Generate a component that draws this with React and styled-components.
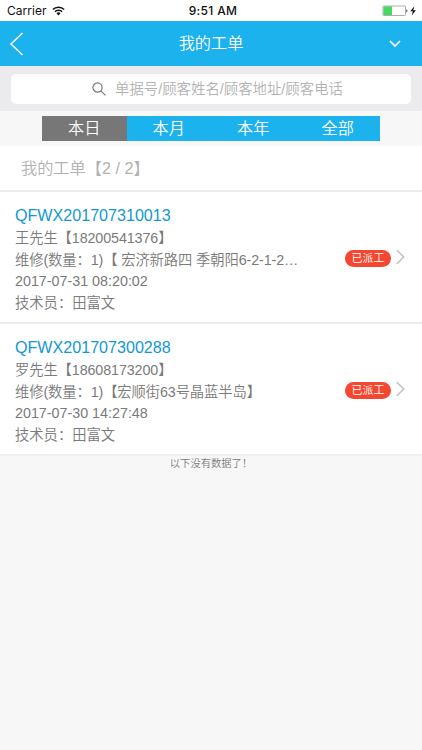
import React from "react";
import styled, { createGlobalStyle } from "styled-components";

const GlobalStyle = createGlobalStyle`
  * { box-sizing: border-box; }
  body { margin: 0; background: #f7f7f7; }
`;

const Page = styled.div`
  display: flex;
  flex-direction: column;
  width: 422px;
  min-height: 750px;
  background: #f7f7f7;
  color: #7a7a7a;
  font-family: "Liberation Sans", "Noto Sans CJK SC", sans-serif;
  font-weight: 350;
  white-space: nowrap;
`;

const StatusBar = styled.div`
  display: grid;
  grid-template-columns: 1fr auto 1fr;
  align-items: center;
  height: 21px;
  padding: 1px 4px 0 7px;
  background: #fff;
  color: #111;
  font: 400 12px/20px Inter, sans-serif;
`;

const Carrier = styled.div`
  display: flex;
  align-items: center;
  gap: 5px;
  letter-spacing: 0.05px;
`;

const Clock = styled.div`
  font-weight: 500;
  letter-spacing: 0.35px;
  padding-left: 1px;
`;

const Power = styled.div`
  display: flex;
  justify-content: flex-end;
`;

const NavBar = styled.header`
  display: grid;
  grid-template-columns: 40px 1fr 40px;
  align-items: center;
  height: 45px;
  background: #1bb2ed;
  color: #fff;
`;

const NavIcon = styled.button`
  display: flex;
  height: 45px;
  padding: 0;
  border: 0;
  background: none;
  color: inherit;
  align-items: center;
`;

const NavTitle = styled.h1`
  margin: 0;
  text-align: center;
  font-size: 16.2px;
  font-weight: 350;
  line-height: 45px;
`;

const SearchArea = styled.div`
  height: 45px;
  padding: 8px 11px 7px;
  background: #ebebed;
`;

const SearchField = styled.div`
  display: flex;
  align-items: center;
  justify-content: center;
  gap: 9px;
  height: 30px;
  padding-left: 13px;
  border-radius: 5px;
  background: #fff;
  color: #b2b2b2;
  font-size: 14.4px;
  line-height: 31px;
`;

const TabArea = styled.div`
  display: flex;
  justify-content: center;
  height: 35px;
  padding: 5px 42px;
`;

const Tab = styled.button`
  flex: 1;
  height: 25px;
  padding: 0;
  border: 0;
  background: ${(p) => (p.$active ? "#777" : "#1bb2ed")};
  color: #fff;
  font: inherit;
  font-size: 16.2px;
  line-height: 25px;
`;

const SectionTitle = styled.h2`
  height: 46px;
  margin: 0;
  padding-left: 21px;
  border-bottom: 2px solid #ececec;
  background: #fff;
  color: #b2b2b2;
  font-size: 16.2px;
  font-weight: 350;
  line-height: 45px;
`;

const Order = styled.article`
  display: flex;
  align-items: center;
  height: 132px;
  padding: 0 17px 0 15px;
  border-bottom: 2px solid #ececec;
  background: #fff;

  &:last-of-type {
    border-bottom-color: #f0f0f2;
  }
`;

const OrderBody = styled.div`
  width: 288px;
  padding-top: 4px;
`;

const OrderNumber = styled.div`
  height: 24.4px;
  color: #1398d2;
  font-size: 16.1px;
  line-height: 22px;
`;

const OrderLine = styled.div`
  height: 21.4px;
  overflow: hidden;
  text-overflow: ellipsis;
  font-size: 14.3px;
  letter-spacing: ${(p) => (p.$tight ? "-0.1px" : "normal")};
  line-height: 21.4px;
`;

const Badge = styled.span`
  width: 46px;
  height: 17px;
  margin: 2px 5px 0 auto;
  border-radius: 9px;
  background: #f5462f;
  color: #fff;
  text-align: center;
  font-size: 11px;
  line-height: 17px;
`;

const EndNote = styled.p`
  margin: 0;
  text-align: center;
  font-size: 10.3px;
  line-height: 15px;
`;

const orders = [
  {
    id: "QFWX201707310013",
    customer: "王先生【18200541376】",
    job: "维修(数量：1)【 宏济新路四 季朝阳6-2-1-2…",
    time: "2017-07-31 08:20:02",
    technician: "田富文",
  },
  {
    id: "QFWX201707300288",
    customer: "罗先生【18608173200】",
    job: "维修(数量：1)【宏顺街63号晶蓝半岛】",
    time: "2017-07-30 14:27:48",
    technician: "田富文",
  },
];

const WifiIcon = () => (
  <svg width="13" height="10" viewBox="0 0 13 10" fill="none" stroke="#111" strokeWidth="1.5">
    <path d="M.8 3.5a8.1 8.1 0 0 1 11.4 0M2.9 5.7a5.1 5.1 0 0 1 7.2 0" />
    <path d="M6.5 9.4 4.5 7.3a2.9 2.9 0 0 1 4 0Z" fill="#111" stroke="none" />
  </svg>
);

const BatteryIcon = () => (
  <svg width="36" height="12" viewBox="0 0 36 12">
    <rect x="1" y="1" width="22.5" height="9.5" rx="1" fill="#fff" stroke="#999" strokeWidth=".8" />
    <path d="M1.4 1.4H10v8.7H1.4z" fill="#4bd763" />
    <path d="M24 4.2q1.5 0 1.5 1.6T24 7.4z" fill="#777" />
    <path d="m32.3 1.2-4 5.1h2.5l-1 4.2 4.1-5.3h-2.6z" fill="#111" />
  </svg>
);

const ArrowRight = () => (
  <svg width="9" height="16" viewBox="0 0 9 16" fill="none" stroke="#c2c2c5" strokeWidth="1.5">
    <path d="m.7 1 7 7-7 7" />
  </svg>
);

export default function App() {
  return (
    <Page>
      <GlobalStyle />
      <StatusBar>
        <Carrier>Carrier <WifiIcon /></Carrier>
        <Clock>9:51 AM</Clock>
        <Power><BatteryIcon /></Power>
      </StatusBar>
      <NavBar>
        <NavIcon aria-label="返回">
          <svg width="25" height="24" viewBox="0 0 25 24" fill="none" stroke="#fff" strokeWidth="1.5">
            <path d="M22.5 1 11 12l11.5 11" />
          </svg>
        </NavIcon>
        <NavTitle>我的工单</NavTitle>
        <NavIcon aria-label="更多">
          <svg width="20" height="12" viewBox="0 0 20 12" fill="none" stroke="#fff" strokeWidth="1.7">
            <path d="m8 3 5 5 5-5" />
          </svg>
        </NavIcon>
      </NavBar>
      <SearchArea>
        <SearchField>
          <svg width="14" height="14" viewBox="0 0 14 14" fill="none" stroke="#777" strokeWidth="1.2">
            <circle cx="5.5" cy="5.5" r="4.6" />
            <path d="m8.9 8.9 4.5 4.5" />
          </svg>
          <span>单据号/顾客姓名/顾客地址/顾客电话</span>
        </SearchField>
      </SearchArea>
      <TabArea>
        {["本日", "本月", "本年", "全部"].map((label, i) => (
          <Tab key={label} $active={i === 0}>{label}</Tab>
        ))}
      </TabArea>
      <SectionTitle>我的工单【2 / 2】</SectionTitle>
      {orders.map((o) => (
        <Order key={o.id}>
          <OrderBody>
            <OrderNumber>{o.id}</OrderNumber>
            <OrderLine $tight>{o.customer}</OrderLine>
            <OrderLine $tight>{o.job}</OrderLine>
            <OrderLine>{o.time}</OrderLine>
            <OrderLine>技术员：{o.technician}</OrderLine>
          </OrderBody>
          <Badge>已派工</Badge>
          <ArrowRight />
        </Order>
      ))}
      <EndNote>以下没有数据了！</EndNote>
    </Page>
  );
}
